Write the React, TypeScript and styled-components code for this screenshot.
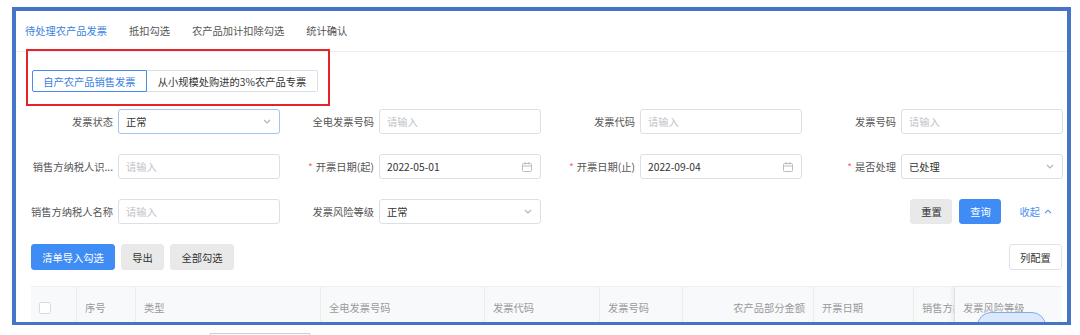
import React from 'react'
import styled, { createGlobalStyle } from 'styled-components'

const GlobalStyle = createGlobalStyle`
  html, body {
    margin: 0;
    padding: 0;
    background: #ffffff;
  }
  body {
    font-family: 'Noto Sans CJK SC', 'Noto Sans', 'Liberation Sans', sans-serif;
    font-size: 10.25px;
    color: #333333;
  }
  * {
    box-sizing: border-box;
  }
`

const Frame = styled.div`
  position: relative;
  margin: 7px 0 0 12px;
  width: 1059px;
  height: 318px;
  border: 4px solid #4674c6;
  border-bottom-width: 3px;
  background: #ffffff;
  overflow: hidden;
`

const TabBar = styled.div`
  display: flex;
  align-items: center;
  gap: 22px;
  height: 41px;
  padding-left: 9px;
  border-bottom: 1px solid #efefef;
`

const Tab = styled.div<{ $active?: boolean }>`
  line-height: 16px;
  color: ${p => (p.$active ? '#3b7fe0' : '#555555')};
`

const Content = styled.div`
  padding: 0 0 0 15px;
`

const Segments = styled.div`
  display: flex;
  margin: 18px 0 0 1px;
  height: 22px;
`

const Segment = styled.div<{ $active?: boolean; $width: number }>`
  display: flex;
  align-items: center;
  justify-content: center;
  width: ${p => p.$width}px;
  border: 1px solid ${p => (p.$active ? '#4a8ae8' : '#dcdfe6')};
  border-left-width: ${p => (p.$active ? '1px' : '0')};
  border-radius: ${p => (p.$active ? '2px 0 0 2px' : '0 2px 2px 0')};
  color: ${p => (p.$active ? '#3b7fe0' : '#333333')};
`

const FormGrid = styled.div`
  display: grid;
  grid-template-columns: repeat(4, 249px);
  column-gap: 12px;
  row-gap: 20px;
  margin-top: 17px;
`

const Field = styled.div`
  display: flex;
  align-items: center;
  height: 25px;
`

const Label = styled.div`
  display: flex;
  justify-content: flex-end;
  flex: 0 0 82px;
  margin-right: 5px;
  white-space: nowrap;
  color: #555555;
`

const Star = styled.span`
  color: #f56c6c;
  margin-right: 3px;
`

const InputBox = styled.div<{ $focus?: boolean }>`
  display: flex;
  align-items: center;
  justify-content: space-between;
  width: 162px;
  height: 25px;
  padding: 0 8px 0 7px;
  border: 1px solid ${p => (p.$focus ? '#a3c3f0' : '#dcdfe6')};
  border-radius: 3px;
  background: #ffffff;
`

const Value = styled.span<{ $placeholder?: boolean }>`
  color: ${p => (p.$placeholder ? '#bfc3ca' : '#333333')};
`

const SearchActions = styled.div`
  grid-column: 3 / span 2;
  display: flex;
  align-items: center;
  justify-content: flex-end;
  gap: 7px;
  padding-right: 11px;
`

const Button = styled.button<{ $kind: 'primary' | 'gray' | 'plain'; $width: number; $height?: number }>`
  width: ${p => p.$width}px;
  height: ${p => p.$height ?? 25}px;
  padding: 0;
  font: inherit;
  border-radius: 3px;
  border: 1px solid
    ${p => (p.$kind === 'primary' ? '#3f8cf5' : p.$kind === 'gray' ? '#e8e8e8' : '#e2e2e2')};
  background: ${p => (p.$kind === 'primary' ? '#3f8cf5' : p.$kind === 'gray' ? '#e9e9e9' : '#ffffff')};
  color: ${p => (p.$kind === 'primary' ? '#ffffff' : '#333333')};
`

const Collapse = styled.span`
  display: flex;
  align-items: center;
  gap: 4px;
  margin-left: 11px;
  color: #4a8ef0;
`

const ActionBar = styled.div`
  display: flex;
  align-items: center;
  gap: 6px;
  margin-top: 20px;
  padding-right: 5px;
`

const Spacer = styled.div`
  flex: 1;
`

const TableHead = styled.div`
  display: flex;
  height: 42px;
  margin-top: 16px;
  margin-right: 5px;
  background: #f8f9fb;
  border-top: 1px solid #f0f0f0;
`

const HeadCell = styled.div<{ $width: number; $right?: boolean; $fixed?: boolean }>`
  display: flex;
  align-items: center;
  justify-content: ${p => (p.$right ? 'flex-end' : 'flex-start')};
  flex: 0 0 ${p => p.$width}px;
  padding: 0 8px 0 8px;
  border-right: 1px solid #ececec;
  color: #9a9a9a;
  white-space: nowrap;
  overflow: hidden;
  box-shadow: ${p => (p.$fixed ? '-3px 0 4px rgba(0,0,0,0.06)' : 'none')};
  &:last-child {
    border-right: none;
  }
`

const CheckBox = styled.span`
  display: block;
  width: 12px;
  height: 12px;
  border: 1px solid #dcdcdc;
  border-radius: 2px;
  background: #ffffff;
`

const Annotation = styled.div`
  position: absolute;
  left: 10px;
  top: 38px;
  width: 304px;
  height: 57px;
  border: 2px solid #e6222b;
  pointer-events: none;
`

const FloatPill = styled.div`
  position: absolute;
  left: 961px;
  top: 301px;
  width: 69px;
  height: 30px;
  border: 1px solid #86adea;
  border-radius: 14px 14px 0 0;
  background: #dce8fb;
`

const BelowBox = styled.div`
  margin: 8px 0 0 210px;
  width: 100px;
  height: 2px;
  border: 1px solid #cfcfcf;
  border-bottom: none;
`

const Chevron = ({ up, color = '#b0b4bb' }: { up?: boolean; color?: string }) => (
  <svg width="8" height="5" viewBox="0 0 8 5">
    <path
      d={up ? 'M1 4.2 L4 1.2 L7 4.2' : 'M1 1 L4 4 L7 1'}
      fill="none"
      stroke={color}
      strokeWidth="1.1"
    />
  </svg>
)

const CalendarIcon = () => (
  <svg width="10" height="10" viewBox="0 0 10 10">
    <rect x="0.5" y="1.5" width="9" height="8" rx="1" fill="none" stroke="#b8bcc3" strokeWidth="1" />
    <line x1="0.5" y1="4" x2="9.5" y2="4" stroke="#b8bcc3" strokeWidth="1" />
    <line x1="3" y1="0" x2="3" y2="2.5" stroke="#b8bcc3" strokeWidth="1" />
    <line x1="7" y1="0" x2="7" y2="2.5" stroke="#b8bcc3" strokeWidth="1" />
  </svg>
)

type FieldDef = {
  label: string
  required?: boolean
  value?: string
  icon?: 'select' | 'date'
  focus?: boolean
}

const FormField = ({ label, required, value, icon, focus }: FieldDef) => (
  <Field>
    <Label>
      {required && <Star>*</Star>}
      {label}
    </Label>
    <InputBox $focus={focus}>
      <Value $placeholder={!value}>{value || '请输入'}</Value>
      {icon === 'select' && <Chevron />}
      {icon === 'date' && <CalendarIcon />}
    </InputBox>
  </Field>
)

const fields: FieldDef[] = [
  { label: '发票状态', value: '正常', icon: 'select', focus: true },
  { label: '全电发票号码' },
  { label: '发票代码' },
  { label: '发票号码' },
  { label: '销售方纳税人识...' },
  { label: '开票日期(起)', required: true, value: '2022-05-01', icon: 'date' },
  { label: '开票日期(止)', required: true, value: '2022-09-04', icon: 'date' },
  { label: '是否处理', required: true, value: '已处理', icon: 'select' },
  { label: '销售方纳税人名称' },
  { label: '发票风险等级', value: '正常', icon: 'select' }
]

const columns = [
  { title: '', width: 46 },
  { title: '序号', width: 59 },
  { title: '类型', width: 185 },
  { title: '全电发票号码', width: 164 },
  { title: '发票代码', width: 115 },
  { title: '发票号码', width: 83 },
  { title: '农产品部分金额', width: 131, right: true },
  { title: '开票日期', width: 100 },
  { title: '销售方纳税人名称', width: 41 },
  { title: '发票风险等级', width: 107, fixed: true }
]

const App: React.FC = () => (
  <>
    <GlobalStyle />
    <Frame>
      <TabBar>
        <Tab $active>待处理农产品发票</Tab>
        <Tab>抵扣勾选</Tab>
        <Tab>农产品加计扣除勾选</Tab>
        <Tab>统计确认</Tab>
      </TabBar>
      <Content>
        <Segments>
          <Segment $active $width={115}>
            自产农产品销售发票
          </Segment>
          <Segment $width={171}>从小规模处购进的3%农产品专票</Segment>
        </Segments>
        <FormGrid>
          {fields.map(f => (
            <FormField key={f.label} {...f} />
          ))}
          <SearchActions>
            <Button $kind="gray" $width={42}>
              重置
            </Button>
            <Button $kind="primary" $width={42}>
              查询
            </Button>
            <Collapse>
              收起
              <Chevron up color="#4a8ef0" />
            </Collapse>
          </SearchActions>
        </FormGrid>
        <ActionBar>
          <Button $kind="primary" $width={84} $height={26}>
            清单导入勾选
          </Button>
          <Button $kind="gray" $width={43} $height={26}>
            导出
          </Button>
          <Button $kind="gray" $width={64} $height={26}>
            全部勾选
          </Button>
          <Spacer />
          <Button $kind="plain" $width={53} $height={26}>
            列配置
          </Button>
        </ActionBar>
        <TableHead>
          {columns.map((c, i) => (
            <HeadCell key={i} $width={c.width} $right={c.right} $fixed={c.fixed}>
              {i === 0 ? <CheckBox /> : c.title}
            </HeadCell>
          ))}
        </TableHead>
      </Content>
      <Annotation />
      <FloatPill />
    </Frame>
    <BelowBox />
  </>
)

export default App
